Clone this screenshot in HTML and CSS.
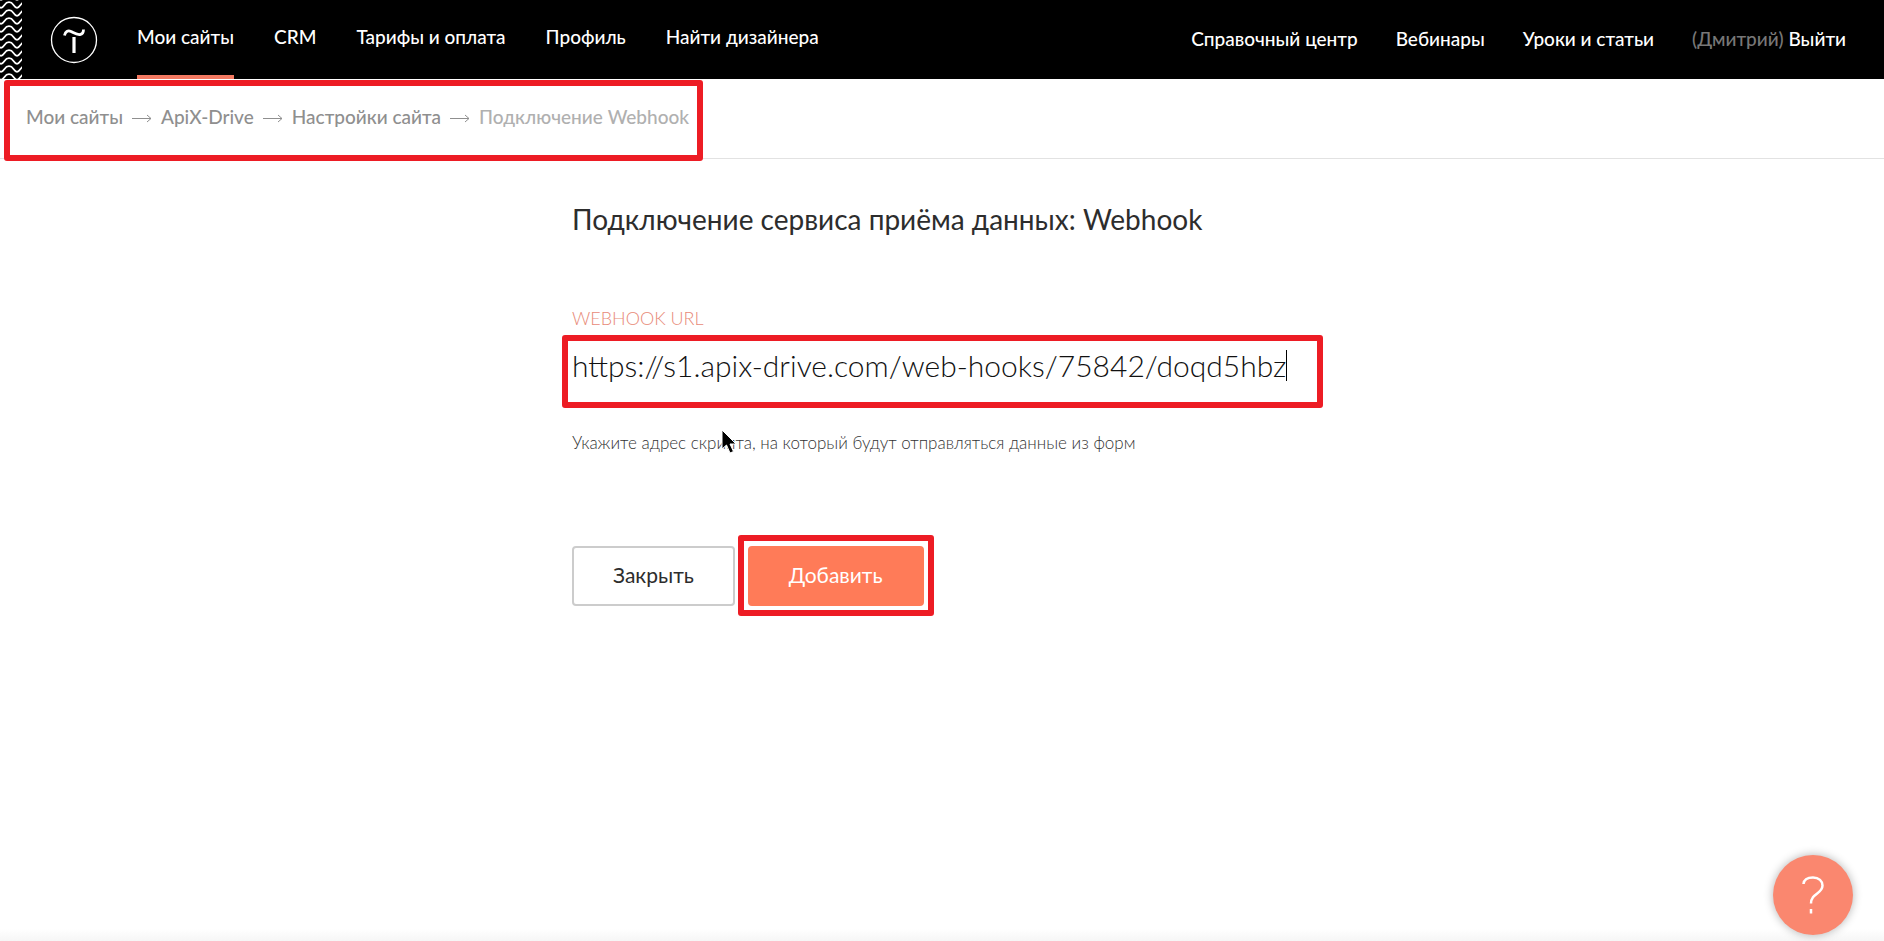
FILE: index.html
```html
<!DOCTYPE html>
<html lang="ru">
<head>
<meta charset="utf-8">
<meta name="viewport" content="width=device-width, initial-scale=1">
<title>Подключение Webhook</title>
<link rel="stylesheet" href="styles.css">
</head>
<body>
<header class="header">
  <svg class="header__waves" width="22" height="79" aria-hidden="true">
    <defs>
      <pattern id="wave" width="16" height="8" patternUnits="userSpaceOnUse" x="1" y="1">
        <path d="M-4 6.300C0 8.300 2 6.300 3.500 4S6 1.200 8 1.200S11 1.700 12.500 4S16 8.300 20 6.300" fill="none" stroke="#fff" stroke-width="1.700"/>
      </pattern>
    </defs>
    <rect width="22" height="79" fill="url(#wave)"/>
  </svg>
  <a class="header__logo" href="#" aria-label="Tilda">
    <svg width="48" height="48" viewBox="0 0 48 48" fill="none" stroke="#fff">
      <circle cx="24" cy="24" r="22.500" stroke-width="1.300"/>
      <path d="M14.500 19.500C15 15.500 18 14 21 15.500S27 19 30 18.500S33.500 16 33.500 13.500" stroke-width="2.800"/>
      <path d="M24 21V37" stroke-width="3.200"/>
    </svg>
  </a>
  <nav class="menu">
    <a class="menu__item menu__item--active" href="#">Мои сайты</a>
    <a class="menu__item" href="#">CRM</a>
    <a class="menu__item" href="#">Тарифы и оплата</a>
    <a class="menu__item" href="#">Профиль</a>
    <a class="menu__item" href="#">Найти дизайнера</a>
  </nav>
  <nav class="menu menu--right">
    <a class="menu__item" href="#">Справочный центр</a>
    <a class="menu__item" href="#">Вебинары</a>
    <a class="menu__item" href="#">Уроки и статьи</a>
    <a class="menu__item" href="#"><span class="menu__user">(Дмитрий)</span> Выйти</a>
  </nav>
</header>
<div class="crumbs-bar">
  <nav class="crumbs">
    <a class="crumbs__link" href="#">Мои сайты</a>
    <svg class="crumbs__arrow" width="20" height="10" viewBox="0 0 20 10"><path d="M0 5.500H19M15 2L19 5.500L15 9"/></svg>
    <a class="crumbs__link" href="#">ApiX-Drive</a>
    <svg class="crumbs__arrow" width="20" height="10" viewBox="0 0 20 10"><path d="M0 5.500H19M15 2L19 5.500L15 9"/></svg>
    <a class="crumbs__link" href="#">Настройки сайта</a>
    <svg class="crumbs__arrow" width="20" height="10" viewBox="0 0 20 10"><path d="M0 5.500H19M15 2L19 5.500L15 9"/></svg>
    <span class="crumbs__current">Подключение Webhook</span>
    <span class="mark mark--crumbs"></span>
  </nav>
</div>
<main class="content">
  <h1 class="title">Подключение сервиса приёма данных: Webhook</h1>
  <form class="form">
    <label class="form__label" for="url">WEBHOOK URL</label>
    <div class="form__field">
      <input class="form__input" id="url" type="text" value="https://s1.apix-drive.com/web-hooks/75842/doqd5hbz">
      <span class="form__caret"></span>
      <span class="mark mark--field"></span>
    </div>
    <p class="form__hint">Укажите адрес скрипта, на который будут отправляться данные из форм
      <svg class="pointer" width="16" height="26" viewBox="0 0 16 26"><path d="M1 1V20L5.500 16L9 24L12.500 22.500L9 15H15Z" fill="#000" stroke="#fff" stroke-width="1"/></svg>
    </p>
    <div class="form__actions">
      <button class="button" type="button">Закрыть</button>
      <div class="form__submit">
        <button class="button button--primary" type="button">Добавить</button>
        <span class="mark mark--submit"></span>
      </div>
    </div>
  </form>
</main>
<div class="shade"></div>
<button class="help" type="button" aria-label="Помощь">
  <svg width="24" height="40" viewBox="0 0 24 40" fill="none" stroke="#fff" stroke-width="2.500"><path d="M2.500 9C3 4 7 2.500 12 2.500C18 2.500 21.500 6 21.500 10.500C21.500 19 10 18 10 28.500M10 34V38.500"/></svg>
</button>
</body>
</html>
```
FILE: styles.css
```css
* {
  box-sizing: border-box;
}

body {
  margin: 0;
  min-height: 100vh;
  background: #fff;
  color: #2d2d2d;
  font-family: Lato, "Liberation Sans", sans-serif;
}

a {
  color: inherit;
  text-decoration: none;
}

.header {
  display: flex;
  height: 79px;
  padding-right: 38px;
  background: #000;
  color: #fff;
}

.header__waves {
  flex: none;
}

.header__logo {
  flex: none;
  height: 48px;
  margin: 16px 39px 0 28px;
}

.menu {
  display: flex;
  gap: 40px;
  font-size: 19px;
  font-weight: 500;
  line-height: 24px;
  white-space: nowrap;
}

.menu__item {
  padding-top: 25px;
}

.menu__item--active {
  border-bottom: 4px solid #f47a62;
}

.menu--right {
  gap: 38px;
  margin-left: auto;
}

.menu--right .menu__item {
  padding-top: 27px;
}

.menu__user {
  color: #777;
}

.crumbs-bar {
  display: flex;
  height: 80px;
  border-bottom: 1px solid #e2e2e2;
}

.crumbs {
  position: relative;
  display: flex;
  gap: 9px;
  align-items: center;
  height: 75px;
  padding: 0 14px 0 26px;
  color: #8f8f8f;
  font-size: 19px;
  font-weight: 500;
  line-height: 24px;
  white-space: nowrap;
}

.crumbs__arrow {
  margin-top: 2px;
  fill: none;
  stroke: #8f8f8f;
  stroke-width: 1;
}

.crumbs__current {
  color: #b0b0b0;
}

.mark {
  position: absolute;
  border: 6px solid #ed1c24;
  border-radius: 3px;
  pointer-events: none;
}

.mark--crumbs {
  inset: 1px 0 -7px 4px;
}

.content {
  max-width: 780px;
  margin: 0 auto;
  padding: 40px 20px;
}

.title {
  margin: 0;
  font-size: 28px;
  font-weight: 400;
  line-height: 40px;
  white-space: nowrap;
}

.form {
  margin-top: 67px;
}

.form__label {
  display: block;
  color: #e88a78;
  font-size: 18px;
  font-weight: 300;
  line-height: 24px;
}

.form__field {
  position: relative;
  display: flex;
  align-items: center;
  height: 60px;
  margin-top: 5px;
}

.form__input {
  field-sizing: content;
  max-width: 100%;
  padding: 0;
  border: 0;
  outline: 0;
  background: none;
  color: #111;
  font-family: inherit;
  font-size: 30px;
  font-weight: 300;
  line-height: 40px;
}

.form__caret {
  width: 1px;
  height: 31px;
  background: #000;
}

.mark--field {
  inset: 0 -11px -13px -10px;
}

.form__hint {
  position: relative;
  margin: 36px 0 0;
  color: #333;
  font-size: 17px;
  font-weight: 300;
  line-height: 24px;
}

.pointer {
  position: absolute;
  top: -2px;
  left: 149px;
}

.form__actions {
  display: flex;
  gap: 13px;
  margin-top: 91px;
}

.form__submit {
  position: relative;
}

.button {
  height: 60px;
  padding: 0 39px 4px;
  border: 2px solid #ccc;
  border-radius: 4px;
  background: #fff;
  color: #2d2d2d;
  font-family: inherit;
  font-size: 21px;
  font-weight: 400;
}

.button--primary {
  border-color: #ff7b58;
  background: #ff7b58;
  color: #fff;
}

.mark--submit {
  inset: -11px -10px -10px -10px;
}

.shade {
  position: fixed;
  right: 0;
  bottom: 0;
  left: 0;
  height: 12px;
  background: linear-gradient(#fff, #f6f6f6);
}

.help {
  position: fixed;
  right: 31px;
  bottom: 6px;
  display: flex;
  align-items: center;
  justify-content: center;
  width: 80px;
  height: 80px;
  padding: 0;
  border: 0;
  border-radius: 50%;
  background: #fa876f;
  box-shadow: 0 0 10px rgba(0, 0, 0, 0.3);
}
```
